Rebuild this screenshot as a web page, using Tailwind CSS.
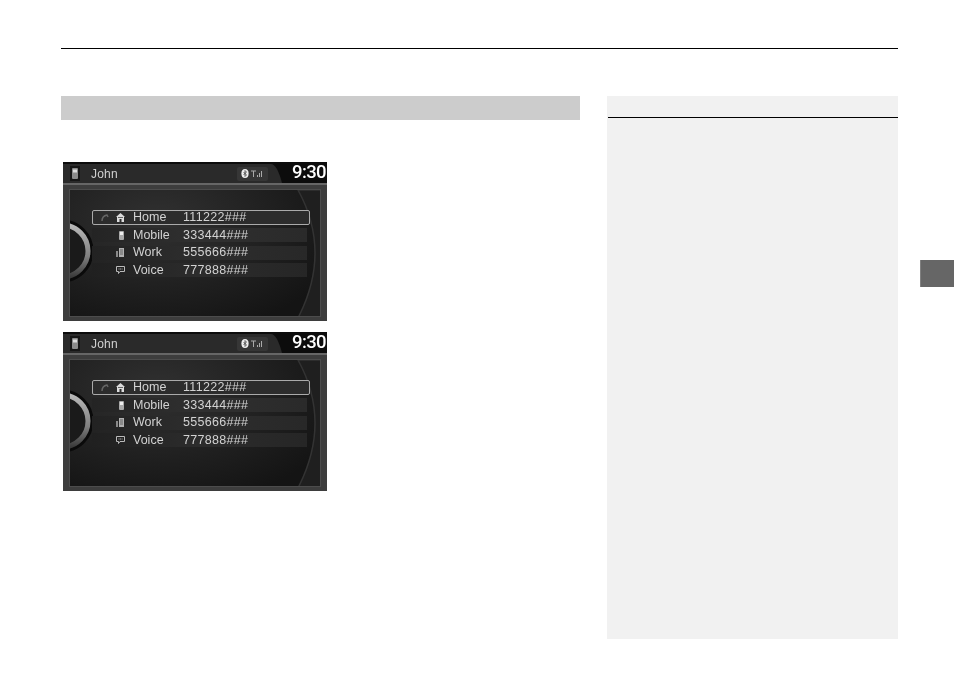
<!DOCTYPE html>
<html>
<head>
<meta charset="utf-8">
<script src="https://cdn.jsdelivr.net/npm/@tailwindcss/browser@4"></script>
</head>
<body class="bg-white">
<div class="w-[954px] h-[673px] bg-white overflow-hidden font-['Liberation_Sans',Arial,sans-serif]">
  <div class="ml-[61px] w-[837px] mt-[48px] h-px bg-black"></div>
  <div class="flex items-start pl-[61px] mt-[47px]">
    <div class="w-[519px]">
      <div class="h-[24px] bg-[#cccccc]"></div>
      <div class="ml-[2px] mt-[42px] flex flex-col gap-[11px]">

        <!-- screen 1 -->
        <div class="relative w-[264px] h-[159px] bg-[#3d3d3d] overflow-hidden blur-[0.4px] flex flex-col">
          <div class="relative h-[21px] pt-[2px] bg-[#0c0c0c] flex items-center text-[#d0d0d0] text-[12px]">
            <svg class="absolute inset-0" width="264" height="21"><path d="M0 2H208Q214 2 219 21H0Z" fill="#2a2a2a"/></svg>
            <div class="relative ml-[7px] w-[10px] h-[15px] bg-[#161616] flex items-center justify-center">
              <svg width="6" height="11" viewBox="0 0 6 11"><rect width="6" height="11" rx="1" fill="#8a8a8a"/><rect x="1" y="1.5" width="4" height="3" fill="#dcdcdc"/></svg>
            </div>
            <span class="relative ml-[11px] tracking-[0.2px]">John</span>
            <div class="relative ml-[119px] w-[31px] h-[14px] bg-[#363636] rounded-[2px] flex items-center justify-center gap-[2px]">
              <svg width="8" height="9" viewBox="0 0 8 9"><ellipse cx="4" cy="4.5" rx="3.6" ry="4.5" fill="#eee"/><path d="M2.5 3l3 3-1.5 1.5v-6l1.5 1.5-3 3" fill="none" stroke="#333" stroke-width=".7"/></svg>
              <svg width="12" height="8" viewBox="0 0 12 8"><path d="M0 1h5M2.5 1v6" stroke="#aaa" stroke-width="1"/><rect x="6" y="5" width="1" height="2" fill="#aaa"/><rect x="8" y="3" width="1" height="4" fill="#aaa"/><rect x="10" y="1" width="1" height="6" fill="#aaa"/></svg>
            </div>
            <span class="relative ml-auto mr-[1px] -mt-[1px] text-[18.5px] text-white tracking-[-0.6px] font-medium font-['Roboto',sans-serif]">9:30</span>
          </div>
          <div class="h-[2px] bg-[#666666]"></div>
          <div class="relative mx-[6px] mt-[4px] h-[128px] border border-[#4c4c4c] bg-[radial-gradient(ellipse_at_35%_25%,#313131_0%,#1e1e1e_55%,#141414_85%)] overflow-hidden">
            <svg class="absolute inset-0" width="252" height="128" fill="none">
              <defs><linearGradient id="ring1" x1="0" y1="0" x2="0" y2="1"><stop offset="0" stop-color="#b8b8b8"/><stop offset=".6" stop-color="#808080"/><stop offset="1" stop-color="#3a3a3a"/></linearGradient></defs>
              <circle cx="-8" cy="61" r="30" fill="#141414" stroke="#0a0a0a" stroke-width="3"/>
              <circle cx="-8" cy="61" r="26" fill="#1a1a1a" stroke="url(#ring1)" stroke-width="5"/>
              <path d="M228 0Q262 62 228 128H252V0Z" fill="#1f1f1f" stroke="#333333" stroke-width="1.5"/>
            </svg>
            <div class="relative ml-[22px] mt-[20px] w-[218px] flex flex-col text-[12.5px] text-[#d2d2d2]">
              <div class="h-[15px] w-[218px] border border-[#aaaaaa] rounded-[2px] bg-[#2c2c2c] flex items-center leading-none">
                <svg class="ml-[8px] w-[8px]" height="8" viewBox="0 0 8 8" fill="none"><path d="M1 7Q1 2 6 1l1 2" stroke="#666" stroke-width="1.5"/></svg>
                <svg class="ml-[7px] w-[9px]" height="9" viewBox="0 0 9 9"><path d="M4.5 0L9 4H8V9H5.5V6H3.5V9H1V4H0Z" fill="#dcdcdc"/><path d="M2 4.5h5" stroke="#444" stroke-width=".8"/></svg>
                <span class="ml-[8px] w-[50px]">Home</span><span class="tracking-[0.3px]">111222###</span>
              </div>
              <div class="mt-[3px] h-[14px] w-[215px] bg-linear-to-r from-[#242424] via-[#303030] to-[#2a2a2a] flex items-center leading-none">
                <svg class="ml-[27px] w-[5px]" height="9" viewBox="0 0 5 9"><rect width="5" height="9" rx="1" fill="#aaa"/><rect x="1" y="1" width="3" height="3" fill="#eee"/></svg>
                <span class="ml-[9px] w-[50px]">Mobile</span><span class="tracking-[0.3px]">333444###</span>
              </div>
              <div class="mt-[3.5px] h-[14px] w-[215px] bg-linear-to-r from-[#222222] via-[#2e2e2e] to-[#282828] flex items-center leading-none">
                <svg class="ml-[24px] w-[8px]" height="9" viewBox="0 0 8 9"><rect x="3" width="5" height="9" fill="#b0b0b0"/><path d="M4 2h3M4 4h3M4 6h3" stroke="#444" stroke-width=".7"/><rect y="3" width="2" height="6" fill="#8a8a8a"/></svg>
                <span class="ml-[9px] w-[50px]">Work</span><span class="tracking-[0.3px]">555666###</span>
              </div>
              <div class="mt-[3.5px] h-[14px] w-[215px] bg-linear-to-r from-[#202020] via-[#2c2c2c] to-[#262626] flex items-center leading-none">
                <svg class="ml-[24px] w-[9px]" height="8" viewBox="0 0 9 8" fill="none"><path d="M.5.5h8v5H4L2.5 7.5v-2h-2Z" stroke="#bbb"/><path d="M2.5 3h4" stroke="#bbb" stroke-dasharray="1 .6"/></svg>
                <span class="ml-[8px] w-[50px]">Voice</span><span class="tracking-[0.3px]">777888###</span>
              </div>
            </div>
          </div>
        </div>

        <!-- screen 2 -->
        <div class="relative w-[264px] h-[159px] bg-[#3d3d3d] overflow-hidden blur-[0.4px] flex flex-col">
          <div class="relative h-[21px] pt-[2px] bg-[#0c0c0c] flex items-center text-[#d0d0d0] text-[12px]">
            <svg class="absolute inset-0" width="264" height="21"><path d="M0 2H208Q214 2 219 21H0Z" fill="#2a2a2a"/></svg>
            <div class="relative ml-[7px] w-[10px] h-[15px] bg-[#161616] flex items-center justify-center">
              <svg width="6" height="11" viewBox="0 0 6 11"><rect width="6" height="11" rx="1" fill="#8a8a8a"/><rect x="1" y="1.5" width="4" height="3" fill="#dcdcdc"/></svg>
            </div>
            <span class="relative ml-[11px] tracking-[0.2px]">John</span>
            <div class="relative ml-[119px] w-[31px] h-[14px] bg-[#363636] rounded-[2px] flex items-center justify-center gap-[2px]">
              <svg width="8" height="9" viewBox="0 0 8 9"><ellipse cx="4" cy="4.5" rx="3.6" ry="4.5" fill="#eee"/><path d="M2.5 3l3 3-1.5 1.5v-6l1.5 1.5-3 3" fill="none" stroke="#333" stroke-width=".7"/></svg>
              <svg width="12" height="8" viewBox="0 0 12 8"><path d="M0 1h5M2.5 1v6" stroke="#aaa" stroke-width="1"/><rect x="6" y="5" width="1" height="2" fill="#aaa"/><rect x="8" y="3" width="1" height="4" fill="#aaa"/><rect x="10" y="1" width="1" height="6" fill="#aaa"/></svg>
            </div>
            <span class="relative ml-auto mr-[1px] -mt-[1px] text-[18.5px] text-white tracking-[-0.6px] font-medium font-['Roboto',sans-serif]">9:30</span>
          </div>
          <div class="h-[2px] bg-[#666666]"></div>
          <div class="relative mx-[6px] mt-[4px] h-[128px] border border-[#4c4c4c] bg-[radial-gradient(ellipse_at_35%_25%,#313131_0%,#1e1e1e_55%,#141414_85%)] overflow-hidden">
            <svg class="absolute inset-0" width="252" height="128" fill="none">
              <defs><linearGradient id="ring2" x1="0" y1="0" x2="0" y2="1"><stop offset="0" stop-color="#b8b8b8"/><stop offset=".6" stop-color="#808080"/><stop offset="1" stop-color="#3a3a3a"/></linearGradient></defs>
              <circle cx="-8" cy="61" r="30" fill="#141414" stroke="#0a0a0a" stroke-width="3"/>
              <circle cx="-8" cy="61" r="26" fill="#1a1a1a" stroke="url(#ring2)" stroke-width="5"/>
              <path d="M228 0Q262 62 228 128H252V0Z" fill="#1f1f1f" stroke="#333333" stroke-width="1.5"/>
            </svg>
            <div class="relative ml-[22px] mt-[20px] w-[218px] flex flex-col text-[12.5px] text-[#d2d2d2]">
              <div class="h-[15px] w-[218px] border border-[#aaaaaa] rounded-[2px] bg-[#2c2c2c] flex items-center leading-none">
                <svg class="ml-[8px] w-[8px]" height="8" viewBox="0 0 8 8" fill="none"><path d="M1 7Q1 2 6 1l1 2" stroke="#666" stroke-width="1.5"/></svg>
                <svg class="ml-[7px] w-[9px]" height="9" viewBox="0 0 9 9"><path d="M4.5 0L9 4H8V9H5.5V6H3.5V9H1V4H0Z" fill="#dcdcdc"/><path d="M2 4.5h5" stroke="#444" stroke-width=".8"/></svg>
                <span class="ml-[8px] w-[50px]">Home</span><span class="tracking-[0.3px]">111222###</span>
              </div>
              <div class="mt-[3px] h-[14px] w-[215px] bg-linear-to-r from-[#242424] via-[#303030] to-[#2a2a2a] flex items-center leading-none">
                <svg class="ml-[27px] w-[5px]" height="9" viewBox="0 0 5 9"><rect width="5" height="9" rx="1" fill="#aaa"/><rect x="1" y="1" width="3" height="3" fill="#eee"/></svg>
                <span class="ml-[9px] w-[50px]">Mobile</span><span class="tracking-[0.3px]">333444###</span>
              </div>
              <div class="mt-[3.5px] h-[14px] w-[215px] bg-linear-to-r from-[#222222] via-[#2e2e2e] to-[#282828] flex items-center leading-none">
                <svg class="ml-[24px] w-[8px]" height="9" viewBox="0 0 8 9"><rect x="3" width="5" height="9" fill="#b0b0b0"/><path d="M4 2h3M4 4h3M4 6h3" stroke="#444" stroke-width=".7"/><rect y="3" width="2" height="6" fill="#8a8a8a"/></svg>
                <span class="ml-[9px] w-[50px]">Work</span><span class="tracking-[0.3px]">555666###</span>
              </div>
              <div class="mt-[3.5px] h-[14px] w-[215px] bg-linear-to-r from-[#202020] via-[#2c2c2c] to-[#262626] flex items-center leading-none">
                <svg class="ml-[24px] w-[9px]" height="8" viewBox="0 0 9 8" fill="none"><path d="M.5.5h8v5H4L2.5 7.5v-2h-2Z" stroke="#bbb"/><path d="M2.5 3h4" stroke="#bbb" stroke-dasharray="1 .6"/></svg>
                <span class="ml-[8px] w-[50px]">Voice</span><span class="tracking-[0.3px]">777888###</span>
              </div>
            </div>
          </div>
        </div>

      </div>
    </div>
    <div class="ml-[27px] w-[291px] h-[543px] bg-[#f1f1f1]">
      <div class="h-[22px] border-b border-black ml-px"></div>
    </div>
    <div class="ml-[22px] mt-[164px] w-[34px] h-[27px] bg-[#666666] border-l border-[#808080]"></div>
  </div>
</div>
</body>
</html>
